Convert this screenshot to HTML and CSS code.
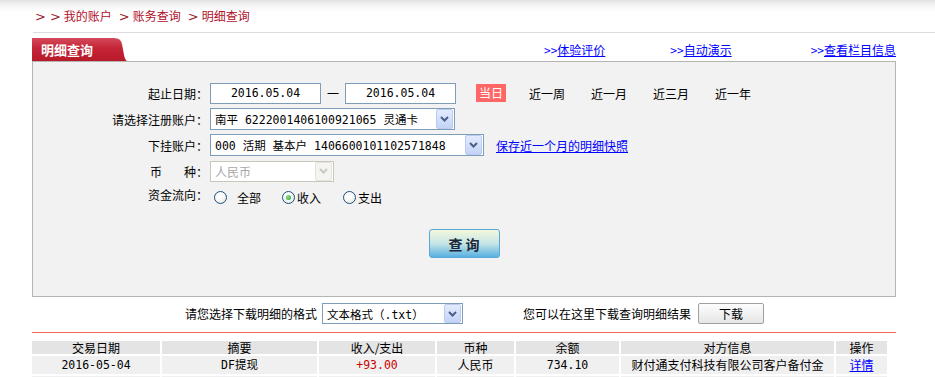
FILE: index.html
```html
<!DOCTYPE html>
<html lang="zh-CN">
<head>
<meta charset="utf-8">
<title>明细查询</title>
<link rel="stylesheet" href="styles.css">
</head>
<body>
<div class="top">
  <div class="crumb">
    <span class="gt">&gt;</span><span class="gt g2">&gt;</span><span class="ci">我的账户</span><span class="gt g3">&gt;</span><span class="ci">账务查询</span><span class="gt g3">&gt;</span><span class="ci">明细查询</span>
  </div>
</div>
<div class="main">
  <div class="tabrow">
    <div class="tab">
      <svg class="tabbg" width="95" height="23" viewBox="0 0 95 23"><defs><linearGradient id="tg" x1="0" y1="0" x2="0" y2="1"><stop offset="0" stop-color="#d44a5a"/><stop offset="0.45" stop-color="#c42436"/><stop offset="1" stop-color="#b81a2a"/></linearGradient></defs><path d="M0 0 H82 Q89 0 90 6 L92 17 Q93 22 95 23 H0 Z" fill="url(#tg)"/></svg>
      <span class="tabtxt">明细查询</span>
    </div>
    <div class="links">
      <span class="lk l1">&gt;&gt;<a href="#">体验评价</a></span>
      <span class="lk l2">&gt;&gt;<a href="#">自动演示</a></span>
      <span class="lk l3">&gt;&gt;<a href="#">查看栏目信息</a></span>
    </div>
  </div>
  <div class="panel">
    <div class="row">
      <div class="lbl">起止日期：</div>
      <div class="inp">2016.05.04</div>
      <span class="dash">一</span>
      <div class="inp">2016.05.04</div>
      <span class="today">当日</span>
      <span class="per p1">近一周</span>
      <span class="per">近一月</span>
      <span class="per">近三月</span>
      <span class="per">近一年</span>
    </div>
    <div class="row">
      <div class="lbl">请选择注册账户：</div>
      <div class="sel s1"><span class="val mono">南平 6222001406100921065 灵通卡</span><span class="btn"><svg width="9" height="6" viewBox="0 0 9 6"><path d="M1 1 L4.5 4.5 L8 1" fill="none" stroke="#4a5f88" stroke-width="2"/></svg></span></div>
    </div>
    <div class="row">
      <div class="lbl">下挂账户：</div>
      <div class="sel s2"><span class="val mono">000 活期 基本户 1406600101102571848</span><span class="btn"><svg width="9" height="6" viewBox="0 0 9 6"><path d="M1 1 L4.5 4.5 L8 1" fill="none" stroke="#4a5f88" stroke-width="2"/></svg></span></div>
      <a href="#" class="snap">保存近一个月的明细快照</a>
    </div>
    <div class="row">
      <div class="lbl"><span class="bi">币</span>种：</div>
      <div class="sel s3 dis"><span class="val">人民币</span><span class="btn"><svg width="9" height="6" viewBox="0 0 9 6"><path d="M1 1 L4.5 4.5 L8 1" fill="none" stroke="#c8c8c0" stroke-width="2"/></svg></span></div>
    </div>
    <div class="row">
      <div class="lbl up">资金流向：</div>
      <span class="radio r1"></span><span class="rt t1">全部</span>
      <span class="radio r2 on"></span><span class="rt t2">收入</span>
      <span class="radio r3"></span><span class="rt t2">支出</span>
    </div>
    <div class="qrow"><button class="qbtn">查 询</button></div>
  </div>
  <div class="dl">
    <span>请您选择下载明细的格式</span>
    <div class="sel s4"><span class="val mono">文本格式（.txt）</span><span class="btn"><svg width="9" height="6" viewBox="0 0 9 6"><path d="M1 1 L4.5 4.5 L8 1" fill="none" stroke="#4a5f88" stroke-width="2"/></svg></span></div>
    <span class="dlt">您可以在这里下载查询明细结果</span>
    <button class="dbtn">下载</button>
  </div>
  <div class="redline"></div>
  <div class="grid">
    <div class="th">交易日期</div>
    <div class="th">摘要</div>
    <div class="th">收入/支出</div>
    <div class="th">币种</div>
    <div class="th">余额</div>
    <div class="th">对方信息</div>
    <div class="th">操作</div>
    <div class="td mono">2016-05-04</div>
    <div class="td mono">DF提现</div>
    <div class="td mono red">+93.00</div>
    <div class="td">人民币</div>
    <div class="td mono">734.10</div>
    <div class="td">财付通支付科技有限公司客户备付金</div>
    <div class="td"><a href="#">详情</a></div>
    <div class="td"></div><div class="td"></div><div class="td"></div><div class="td"></div><div class="td"></div><div class="td"></div><div class="td"></div>
  </div>
</div>
</body>
</html>
```
FILE: styles.css
```css
html { overflow: hidden; }
body {
  margin: 0;
  background: #fff;
  font-family: "Noto Sans CJK SC", "Liberation Sans", sans-serif;
  font-size: 12px;
  color: #000;
}
.mono { font-family: "DejaVu Sans Mono", "Noto Sans CJK SC", monospace; font-size: 11.5px; }
.top {
  height: 33px;
  background: linear-gradient(#e2e2e2 0, #f6f6f6 6px, #fff 12px);
  padding-left: 33px;
  box-sizing: border-box;
}
.crumb {
  height: 32px;
  border-bottom: 1px solid #dcdcdc;
  display: flex;
  align-items: center;
  padding-left: 2px;
  color: #b0102a;
  line-height: 1;
}
.gt { color: #9a1a28; font-size: 13px; font-family: "DejaVu Sans", sans-serif; }
.g2 { margin-left: 4px; }
.ci { margin-left: 3px; }
.g3 { margin-left: 7px; }
.g3 + .ci { margin-left: 3px; }

.main { margin-left: 32px; width: 864px; }
.tabrow {
  margin-top: 5px;
  height: 23px;
  display: flex;
  align-items: center;
}
.tab { position: relative; width: 95px; height: 23px; }
.tabbg { position: absolute; left: 0; top: 0; }
.tabtxt {
  position: relative;
  display: block;
  padding-left: 9px;
  line-height: 23px;
  color: #fff;
  font-weight: bold;
  font-size: 13px;
}
.links { margin-left: auto; display: flex; color: #0000ff; }
.lk a { color: #0000ff; text-decoration: underline; }
.l2 { margin-left: 65px; }
.l3 { margin-left: 79px; }

.panel {
  border: 1px solid #b4b4b4;
  background: #f2f2f2;
  padding: 18px 0 38px;
}
.row { display: flex; align-items: center; height: 26px; }
.lbl { width: 175px; text-align: right; margin-right: 2px; flex: none; }
.lbl.up { position: relative; top: -3px; }
.bi { margin-right: 22px; }
.inp {
  width: 111px;
  height: 21px;
  box-sizing: border-box;
  border: 1px solid #7f9db9;
  background: #fff;
  text-align: center;
  line-height: 19px;
  font-family: "DejaVu Sans Mono", monospace;
  font-size: 11.5px;
}
.dash { margin: 0 6px; }
.today {
  margin-left: 20px;
  width: 30px;
  height: 18px;
  line-height: 18px;
  background: #ff6666;
  color: #fff;
  text-align: center;
  font-size: 12px;
}
.per { margin-left: 26px; }
.per.p1 { margin-left: 23px; }

.sel {
  display: flex;
  align-items: center;
  height: 22px;
  box-sizing: border-box;
  border: 1px solid #7f9db9;
  background: #fff;
  flex: none;
}
.sel .val { flex: 1; padding-left: 4px; white-space: pre; overflow: hidden; }
.sel .btn {
  width: 15px;
  height: 18px;
  margin-right: 1px;
  border: 1px solid #b9cbf1;
  border-radius: 2px;
  background: linear-gradient(#e3ebfd, #c3d4f7);
  display: flex;
  align-items: center;
  justify-content: center;
  box-sizing: content-box;
}
.s1 { width: 245px; }
.s2 { width: 274px; }
.s3 { width: 124px; height: 21px; }
.s4 { width: 141px; height: 21px; margin-left: 5px; }
.s4 .btn { height: 17px; }
.dis { border-color: #c9c7ba; }
.dis .val { color: #a8a8a8; }
.dis .btn { background: #f4f4f0; border-color: #e4e2da; height: 17px; }
.snap { margin-left: 12px; color: #0000ff; text-decoration: underline; }

.radio {
  width: 11px;
  height: 11px;
  border-radius: 50%;
  border: 1px solid #1c5180;
  background: radial-gradient(circle at 40% 35%, #fff 30%, #dcdcd4 100%);
  display: flex;
  align-items: center;
  justify-content: center;
  flex: none;
}
.radio.on::after {
  content: "";
  width: 5px;
  height: 5px;
  border-radius: 50%;
  background: radial-gradient(circle at 40% 35%, #8ee08e, #21a121);
}
.r1 { margin-left: 4px; }
.t1 { margin-left: 10px; }
.r2 { margin-left: 21px; }
.t2 { margin-left: 2px; }
.r3 { margin-left: 22px; }

.qrow { margin-top: 19px; display: flex; justify-content: center; }
.qbtn {
  width: 71px;
  height: 29px;
  border: 1px solid #58a8d8;
  border-radius: 3px;
  background: linear-gradient(#f4f8dc 0%, #c6e4e6 50%, #58b0e2 100%);
  font-family: "Noto Sans CJK SC", sans-serif;
  font-size: 14px;
  font-weight: bold;
  color: #1c2838;
  padding: 0;
  line-height: 1;
}

.dl {
  display: flex;
  align-items: center;
  height: 21px;
  margin-top: 6px;
  padding-left: 153px;
}
.dlt { margin-left: 60px; }
.dbtn {
  margin-left: 7px;
  width: 66px;
  height: 21px;
  border: 1px solid #a0a0a0;
  border-radius: 2px;
  background: linear-gradient(#fdfdfd, #e6e6e6);
  font-family: "Noto Sans CJK SC", sans-serif;
  font-size: 12px;
  color: #000;
  padding: 0;
}
.redline { margin-top: 8px; height: 1px; background: #f06464; }

.grid {
  margin-top: 8px;
  display: grid;
  grid-template-columns: 128px 155px 116px 77px 103px 213px 51px;
  grid-template-rows: 13px 18px 18px;
  gap: 2px;
  width: 855px;
  background: #fff;
}
.th {
  background: #e4e4e4;
  text-align: center;
  line-height: 13px;
}
.td {
  background: #f0f0f0;
  text-align: center;
  line-height: 18px;
}
.td.red { color: #cc0000; }
.td a { color: #0000ff; text-decoration: underline; }
```
